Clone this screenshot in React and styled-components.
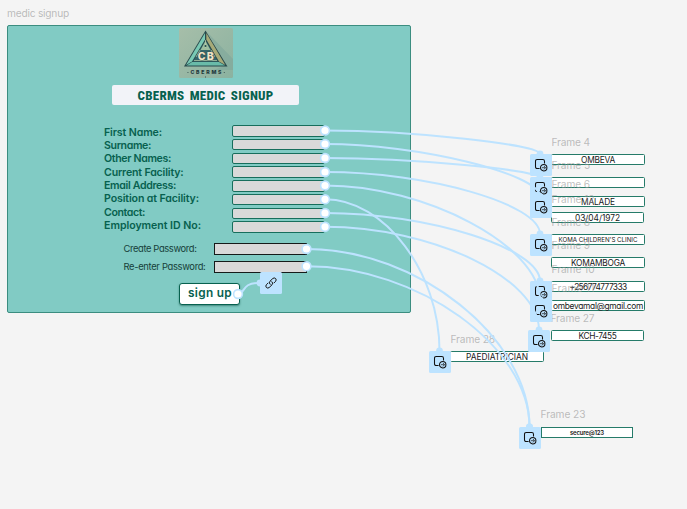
import React, { useLayoutEffect, useRef, useState } from "react";
import styled, { createGlobalStyle } from "styled-components";

const GREEN = "#07614f";
const WIRE = "#bde3ff";

const GlobalStyle = createGlobalStyle`
  * { box-sizing: border-box; }
  html, body { margin: 0; height: 100%; overflow: hidden; background: #f4f4f4; }
`;

const Canvas = styled.main`
  position: relative;
  width: 687px;
  height: 509px;
  overflow: hidden;
  background: #f4f4f4;
  font-family: Inter, "Liberation Sans", sans-serif;
  font-feature-settings: "cv11" 1;
`;

const TextRun = styled.span`
  display: inline-block;
  white-space: nowrap;
`;

/* Spreads or tightens the letters so that the text takes the given width. */
function FitText({ width, children }) {
  const ref = useRef(null);
  const [spacing, setSpacing] = useState(0);
  useLayoutEffect(() => {
    const natural = ref.current.getBoundingClientRect().width;
    setSpacing((width - natural) / children.length);
  }, [width, children]);
  return (
    <TextRun ref={ref} style={{ letterSpacing: `${spacing}px` }}>
      {children}
    </TextRun>
  );
}

const CanvasLabel = styled.div`
  position: absolute;
  left: ${(p) => p.$x}px;
  top: ${(p) => Math.round(p.$y) - 7}px;
  line-height: 14px;
  font-size: 10.2px;
  font-feature-settings: normal;
  color: rgba(150, 150, 150, 0.62);
`;

const Panel = styled.section`
  position: absolute;
  left: 7px;
  top: 25px;
  width: 404px;
  height: 288px;
  display: flex;
  flex-direction: column;
  padding-top: 2px;
  background: #81cbc4;
  border: 1px solid #3b8d80;
  border-radius: 2px;
  color: ${GREEN};
`;

const Logo = styled.svg`
  display: block;
  width: 54px;
  height: 50px;
  margin-left: 171px;
`;

const Title = styled.h1`
  width: 187px;
  height: 20px;
  margin: 7px 0 0 104px;
  display: flex;
  align-items: center;
  justify-content: center;
  padding-top: 2px;
  background: #f2f3f8;
  border-radius: 2px;
  font: 800 13px/18px Roboto, sans-serif;
  font-stretch: 75%;
  word-spacing: 2px;
`;

const Details = styled.div`
  display: flex;
  align-items: flex-start;
  margin: 20px 0 0 96px;
`;

const LabelColumn = styled.div`
  width: 128px;
  padding-top: 0.8px;
  display: flex;
  flex-direction: column;
`;

const FieldLabel = styled.label`
  height: 13.3px;
  line-height: 13.3px;
  font-size: 10.6px;
  font-weight: 600;
`;

const FieldColumn = styled.div`
  display: flex;
  flex-direction: column;
  gap: 2.25px;
`;

const Field = styled.div`
  width: 93px;
  height: 11.5px;
  background: #d9d9d9;
  border: 1px solid ${(p) => (p.$plain ? "#151b1a" : "#176e5c")};
  border-radius: ${(p) => (p.$plain ? 0 : 2)}px;
`;

const Passwords = styled.div`
  display: flex;
  flex-direction: column;
  gap: 6px;
  margin: 10px 0 0 115.5px;
`;

const PasswordRow = styled.div`
  display: flex;
  align-items: center;
  height: 12px;
`;

const PasswordLabel = styled.label`
  width: 90.5px;
  line-height: 12px;
  font-size: 9.4px;
  color: #163f39;
`;

const SignUp = styled.button`
  width: 61px;
  height: 22px;
  margin: 10px 0 0 171px;
  padding: 0 0 1px 8px;
  background: #fff;
  border: 1.5px solid ${GREEN};
  border-radius: 3px;
  box-shadow: 0 1px 2px rgba(0, 70, 55, 0.5);
  color: ${GREEN};
  font: 600 11.8px/18px Inter, sans-serif;
  font-feature-settings: "cv11" 1;
  text-align: left;
`;

const ValueBox = styled.div`
  position: absolute;
  left: ${(p) => p.$x}px;
  top: ${(p) => p.$y}px;
  width: ${(p) => p.$w || 94}px;
  height: 11px;
  display: flex;
  align-items: center;
  justify-content: center;
  background: #fff;
  border: 1px solid #257b69;
  border-radius: ${(p) => (p.$square ? 0 : 1.5)}px;
  color: #202020;
  font-size: ${(p) => p.$size || 8.4}px;
  font-weight: ${(p) => (p.$square ? 600 : 400)};
  line-height: 10px;
`;

const Chip = styled.div`
  position: absolute;
  left: ${(p) => p.$x}px;
  top: ${(p) => p.$y}px;
  width: 22px;
  height: 22px;
  display: flex;
  align-items: center;
  justify-content: center;
  background: ${WIRE};
  border-radius: 1.5px;
  svg { display: block; }
`;

const Wires = styled.svg`
  position: absolute;
  left: 0;
  top: 0;
  pointer-events: none;
`;

const details = [
  ["First Name:", 58],
  ["Surname:", 47],
  ["Other Names:", 67],
  ["Current Facility:", 79.5],
  ["Email Address:", 72],
  ["Position at Facility:", 95],
  ["Contact:", 41],
  ["Employment ID No:", 97],
];

const values = [
  { x: 551, y: 154, text: "OMBEVA", fit: 34 },
  { x: 551, y: 177 },
  { x: 551, y: 196, text: "MALADE", fit: 34 },
  { x: 551, y: 212, w: 93, text: "03/04/1972", fit: 45 },
  { x: 551, y: 234, text: "KOMA CHILDREN'S CLINIC", fit: 79, size: 6.2 },
  { x: 551, y: 257, text: "KOMAMBOGA", fit: 54 },
  { x: 551, y: 281, text: "+256774777333", fit: 57 },
  { x: 551, y: 300, text: "ombevamal@gmail.com", fit: 90 },
  { x: 551, y: 330, w: 93, text: "KCH-7455", fit: 38 },
  { x: 450, y: 351, text: "PAEDIATRICIAN", fit: 62 },
  { x: 541, y: 427, w: 92, text: "secure@123", fit: 34, size: 6, square: true },
];

const labels = [
  [551.5, 142, "Frame 4", 38.5],
  [551.5, 165, "Frame 5", 38.5],
  [551.5, 184, "Frame 6", 38.5],
  [551.5, 199, "Frame 12", 43],
  [551.5, 222, "Frame 8", 38.5],
  [551.5, 245, "Frame 9", 38.5],
  [551.5, 269, "Frame 10", 43],
  [551.5, 288, "Frame 11", 43],
  [550.5, 318, "Frame 27", 44],
  [450.5, 339, "Frame 28", 44.5],
  [540.5, 414, "Frame 23", 45],
];

const chips = [
  [530, 154], [530, 177], [530, 196], [530, 234], [530, 281],
  [530, 300], [528, 330], [429, 351], [519, 427],
];

/* from x, from y, to x, to y, roundness */
const wires = [
  [325, 130.5, 540, 154, 0.4],
  [325, 144, 540, 196.5, 0.43],
  [325, 158, 540, 178, 0.4],
  [325, 172, 540, 234, 0.48],
  [325, 185.5, 540, 300, 0.47],
  [325, 199.3, 439.5, 351, 0.52],
  [325, 213, 540, 281, 0.48],
  [325, 226.8, 539, 330, 0.5],
  [306.5, 249, 529.5, 427, 0.5],
  [306.5, 266.3, 529.5, 427, 0.5],
];

function wirePath([x1, y1, x2, y2, k]) {
  const dx = x2 - x1;
  const dy = y2 - y1;
  return `M${x1} ${y1}C${x1 + dx * k} ${y1} ${x2} ${y2 - dy * k} ${x2} ${y2}`;
}

function NavigateIcon() {
  return (
    <svg width="14" height="14" viewBox="0 0 14 14" fill="none" stroke="#111" strokeWidth="1.05">
      <path d="M5.6 10.5H3.2Q1.5 10.5 1.5 8.8V3.2Q1.5 1.5 3.2 1.5H8.8Q10.5 1.5 10.5 3.2V5.6" />
      <circle cx="9.7" cy="9.7" r="3.2" />
      <path d="M7.9 9.7H11.5M9.9 7.9L11.5 9.7L9.9 11.5" strokeWidth="0.7" />
    </svg>
  );
}

function LinkIcon() {
  return (
    <svg width="14" height="14" viewBox="0 0 14 14" fill="none" stroke="#111" strokeWidth="1" strokeLinecap="round">
      <path d="M6.1 8.3Q4.5 6.8 6 5.2L8.8 2.5Q10.2 1.3 11.6 2.5Q12.8 3.9 11.6 5.3L10 6.9" />
      <path d="M7.9 5.7Q9.5 7.2 8 8.8L5.2 11.5Q3.8 12.7 2.4 11.5Q1.2 10.1 2.4 8.7L4 7.1" />
    </svg>
  );
}

function BrandLogo() {
  return (
    <Logo viewBox="0 0 54 50">
      <defs>
        <linearGradient id="paper" x1="0" y1="0" x2="1" y2="1">
          <stop offset="0" stopColor="#a6bea9" />
          <stop offset="1" stopColor="#8bb2a0" />
        </linearGradient>
      </defs>
      <rect width="54" height="50" rx="1.5" fill="url(#paper)" />
      <path d="M28 4L54 31V42H35L48 37Z" fill="#7fa79b" opacity=".6" />
      <path d="M26.5 2.5L48.5 38.5H5Z" fill="#284a4c" />
      <path d="M26 5L7 37L13 33.5L26 11.5Z" fill="#79c9b4" />
      <path d="M27.3 5L46.3 37L40 33.5L27.3 11.5Z" fill="#a7aa78" />
      <path d="M7.5 37.4L13 34H40L46 37.4Z" fill="#69bba9" />
      <path d="M26.5 12.5L39 33.4H14Z" fill="#35666a" />
      <path d="M26.5 13L31.5 22H21.5Z" fill="#9dbe9f" />
      <path d="M26.5 12V20M21 22L17 29M32 22L36 29M15 32.5H38" stroke="#bbcda7" strokeWidth=".7" />
      <circle cx="26.5" cy="18" r="1" fill="#224b4d" />
      <text x="26.8" y="32" textAnchor="middle" textLength="16" fontFamily="Inter, sans-serif" fontWeight="800" fontSize="10.5" fill="#f2e4c6" stroke="#37484a" strokeWidth=".7" paintOrder="stroke">CB</text>
      <text x="27" y="46.4" textAnchor="middle" textLength="31" fontFamily="Inter, sans-serif" fontWeight="800" fontSize="5.2" fill="#20383c">CBERMS</text>
      <path d="M8.5 44.5h.9M44.8 44.5h.9M26.5 48.5v1" stroke="#20383c" strokeWidth=".8" />
    </Logo>
  );
}

export default function App() {
  return (
    <Canvas>
      <GlobalStyle />
      <CanvasLabel $x={7} $y={13}>
        <FitText width={62}>medic signup</FitText>
      </CanvasLabel>

      <Panel>
        <BrandLogo />
        <Title><FitText width={136}>CBERMS MEDIC SIGNUP</FitText></Title>
        <Details>
          <LabelColumn>
            {details.map(([text, width]) => (
              <FieldLabel key={text}><FitText width={width}>{text}</FitText></FieldLabel>
            ))}
          </LabelColumn>
          <FieldColumn>
            {details.map(([text]) => <Field key={text} />)}
          </FieldColumn>
        </Details>
        <Passwords>
          <PasswordRow>
            <PasswordLabel><FitText width={73}>Create Password:</FitText></PasswordLabel>
            <Field $plain />
          </PasswordRow>
          <PasswordRow>
            <PasswordLabel><FitText width={82}>Re-enter Password:</FitText></PasswordLabel>
            <Field $plain />
          </PasswordRow>
        </Passwords>
        <SignUp><FitText width={44}>sign up</FitText></SignUp>
      </Panel>

      {values.map((v) => (
        <ValueBox key={v.y} $x={v.x} $y={v.y} $w={v.w} $size={v.size} $square={v.square}>
          {v.text && <FitText width={v.fit}>{v.text}</FitText>}
        </ValueBox>
      ))}
      {labels.map(([x, y, text, width]) => (
        <CanvasLabel key={text} $x={x} $y={y}><FitText width={width}>{text}</FitText></CanvasLabel>
      ))}
      {chips.map(([x, y]) => (
        <Chip key={`${x}-${y}`} $x={x} $y={y}><NavigateIcon /></Chip>
      ))}
      <Chip $x={259.5} $y={272}><LinkIcon /></Chip>

      <Wires width="687" height="509" viewBox="0 0 687 509" fill="none">
        <g stroke={WIRE} strokeWidth="2">
          {wires.map((w) => <path key={w[1]} d={wirePath(w)} />)}
          <path d="M238 294C246 293 241 283 259 283" />
        </g>
        <g fill={WIRE}>
          {wires.map((w) => <circle key={w[1]} cx={w[2]} cy={w[3]} r="3.4" />)}
          <circle cx="260" cy="283" r="3.4" />
        </g>
        <g fill="#fff" stroke={WIRE} strokeWidth="1.6">
          {wires.map((w) => <circle key={w[1]} cx={w[0]} cy={w[1]} r="4.4" />)}
          <circle cx="238" cy="294" r="4.4" />
        </g>
      </Wires>
    </Canvas>
  );
}
